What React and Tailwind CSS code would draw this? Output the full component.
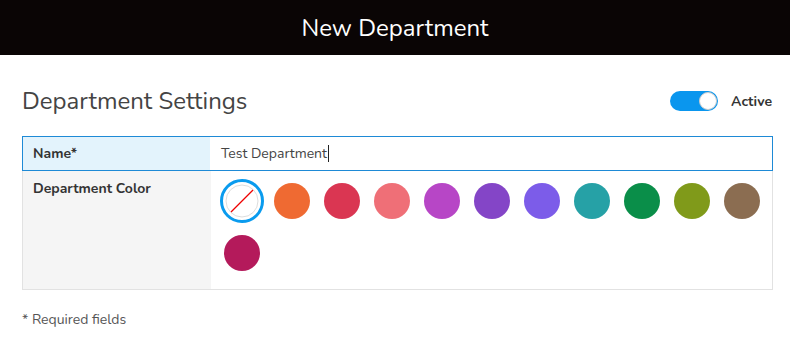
import React from "react";

const colors = [
  "#ef6a32", "#da3652", "#ef6f77", "#b746c6", "#8445c7", "#7c5ce9",
  "#26a1a6", "#0a8e49", "#809a1a", "#8b6d51", "#b41a5b",
];

export default function App() {
  return (
    <div className="w-[790px] h-[347px] bg-white text-[#333] font-['Nunito','Lato',sans-serif]">
      <div className="h-[55px] bg-[#0a0505] flex items-center justify-center">
        <h1 className="text-white text-[24px] leading-none">New Department</h1>
      </div>
      <div className="pl-[22px] pr-[17px] pt-[34px]">
        <div className="flex items-center justify-between">
          <h2 className="text-[24px] text-[#444] leading-none">Department Settings</h2>
          <div className="flex items-center gap-[13px]">
            <div className="w-[48px] h-[20px] rounded-full bg-[#0a96ee] relative">
              <div className="absolute right-[1px] top-[1px] w-[18px] h-[18px] rounded-full bg-white border border-[#ccc]"></div>
            </div>
            <span className="text-[14px] font-bold text-[#333] pr-[1px]">Active</span>
          </div>
        </div>
        <div className="mt-[23px] w-full">
          <div className="flex h-[35px] border border-[#1e8ad6]">
            <div className="w-[187px] bg-[#e3f3fc] flex items-center pl-[10px] text-[14px] font-bold text-[#333]">Name*</div>
            <div className="flex-1 bg-white flex items-center pl-[11px] text-[14px] text-[#444]">
              Test Department<span className="inline-block w-px h-[17px] bg-[#222] ml-[1px]"></span>
            </div>
          </div>
          <div className="flex border border-t-0 border-[#e2e2e2]">
            <div className="w-[188px] bg-[#f5f5f5] pl-[10px] pt-[7px] text-[14px] font-bold text-[#333]">Department Color</div>
            <div className="flex-1 flex flex-wrap gap-x-[10px] gap-y-[12px] pl-[11px] pt-[10px] pb-[16px]">
              <div className="w-[40px] h-[40px] flex items-center justify-center">
                <div className="w-[44px] h-[44px] shrink-0 rounded-full border-[3px] border-[#0a9bee] flex items-center justify-center">
                  <svg width="34" height="34" viewBox="0 0 34 34">
                    <circle cx="17" cy="17" r="16" fill="white" stroke="#dddddd" strokeWidth="1" />
                    <line x1="6" y1="28" x2="28" y2="6" stroke="#e00" strokeWidth="1.3" />
                  </svg>
                </div>
              </div>
              {colors.map((c) => (
                <div key={c} className="w-[40px] h-[40px] flex items-center justify-center">
                  <div className="w-[36px] h-[36px] rounded-full" style={{ backgroundColor: c }}></div>
                </div>
              ))}
            </div>
          </div>
        </div>
        <p className="mt-[19px] text-[14px] text-[#555]">* Required fields</p>
      </div>
    </div>
  );
}
